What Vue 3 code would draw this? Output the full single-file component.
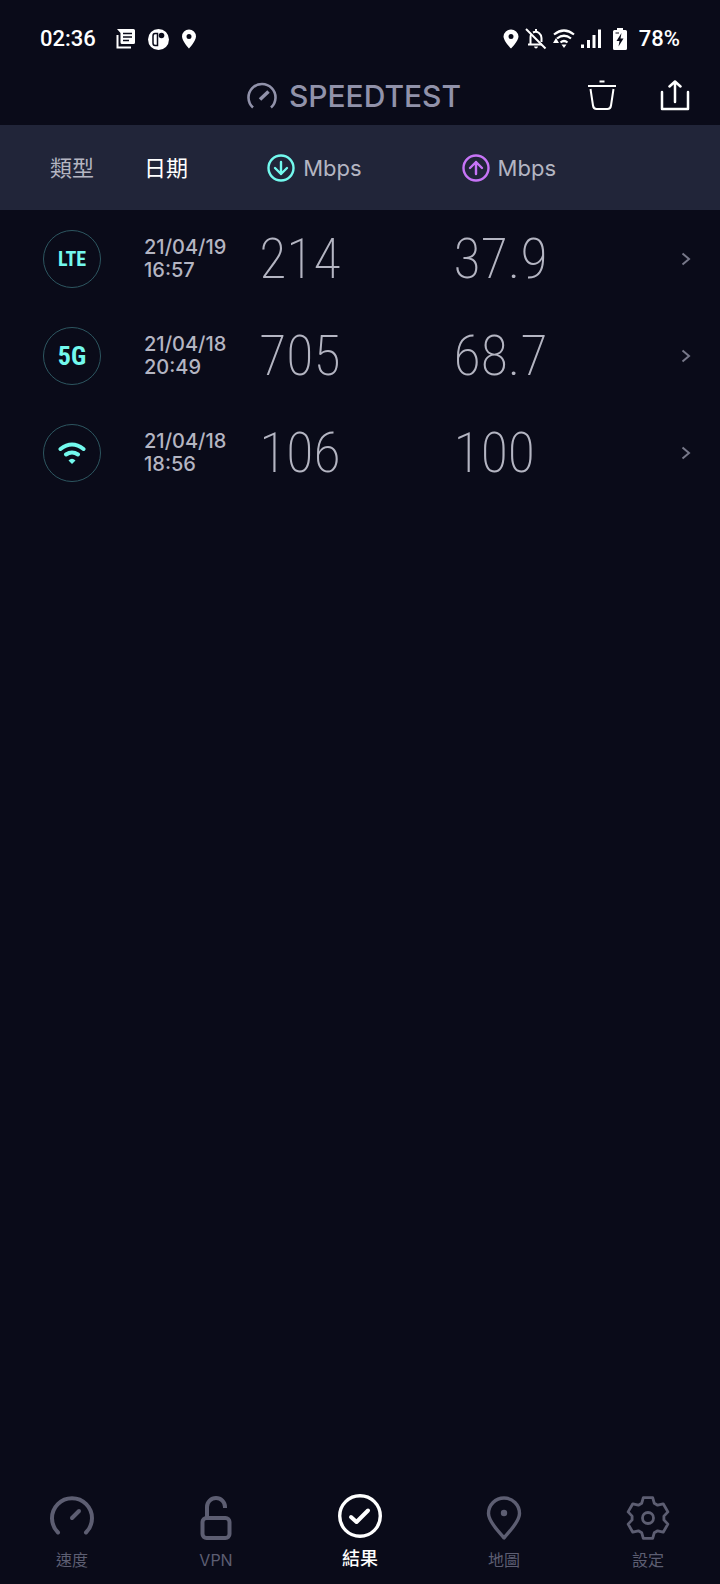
<script setup>
const results = [
  { type: 'LTE', date: '21/04/19', time: '16:57', down: '214', up: '37.9' },
  { type: '5G', date: '21/04/18', time: '20:49', down: '705', up: '68.7' },
  { type: 'wifi', date: '21/04/18', time: '18:56', down: '106', up: '100' },
]

const tabs = [
  { id: 'speed', label: '速度' },
  { id: 'vpn', label: 'VPN' },
  { id: 'results', label: '結果', active: true },
  { id: 'map', label: '地圖' },
  { id: 'settings', label: '設定' },
]

// Outline of a six-toothed gear centred in a 44 x 44 box.
const gearPoints = []
for (let tooth = 0; tooth < 6; tooth++) {
  for (const [offset, radius] of [[-23, 16], [-13, 20.8], [13, 20.8], [23, 16]]) {
    const angle = ((tooth * 60 + offset) * Math.PI) / 180
    gearPoints.push(`${(22 + radius * Math.sin(angle)).toFixed(1)},${(22 - radius * Math.cos(angle)).toFixed(1)}`)
  }
}
const gear = gearPoints.join(' ')
</script>

<template>
  <div class="screen">
    <div class="status">
      <span class="clock">02:36</span>
      <div class="notices">
        <svg width="20" height="20" viewBox="0 0 20 20">
          <path d="M1.5 6V18.5H15" fill="none" stroke="#fff" stroke-width="2" />
          <path d="M1 0H17.5Q19 0 19 1.5V13.5Q19 15 17.5 15H6Q4.5 15 4.5 13.5V4Z" fill="#fff" />
          <path d="M7 4.5H16M7 8H16M7 11.5H13" stroke="#0a0b19" stroke-width="1.5" />
        </svg>
        <svg width="21" height="21" viewBox="0 0 21 21">
          <circle cx="10.5" cy="10.5" r="10.5" fill="#fff" />
          <path d="M9.500 4.500H7Q5 4.500 5 7V14Q5 16.500 7 16.500H9.500Z" fill="#fff" stroke="#0a0b19" stroke-width="1.500" />
          <circle cx="13.5" cy="6.5" r="2.8" fill="#0a0b19" />
        </svg>
        <svg width="16" height="20" viewBox="0 0 16 20">
          <path fill="#fff" fill-rule="evenodd" d="M8 .5A7 7 0 0 0 1 7.5C1 12 8 19.5 8 19.5S15 12 15 7.5A7 7 0 0 0 8 .5ZM8 5A2.5 2.5 0 1 1 8 10A2.5 2.5 0 0 1 8 5Z" />
        </svg>
      </div>
      <div class="system">
        <svg width="16" height="20" viewBox="0 0 16 20">
          <path fill="#fff" fill-rule="evenodd" d="M8 .5A7.500 7.500 0 0 0 .5 7.5C.5 12 8 19.5 8 19.5S15.500 12 15.500 7.5A7.500 7.500 0 0 0 8 .5ZM8 5A2.5 2.5 0 1 1 8 10A2.5 2.5 0 0 1 8 5Z" />
        </svg>
        <svg width="22" height="22" viewBox="0 0 22 22" fill="none" stroke="#fff" stroke-width="2">
          <path d="M6 6.5Q5.5 8 5.5 10V16M3 16.5H17M8 4.5Q11 3 14 5Q16.5 7 16.5 10V14M11 4V1" />
          <path d="M9 18.5H13Q12.5 20.5 11 20.5T9 18.5Z" fill="#fff" stroke="none" />
          <path d="M1 1L20.5 20.5" />
        </svg>
        <svg width="22" height="20" viewBox="0 0 22 20" fill="none" stroke="#fff" stroke-width="2.2">
          <path d="M1 5.5Q11 -2.5 21 5.5M4 9.5Q11 4 18 9.5M7.5 13.5Q11 10.5 14.5 13.5" />
          <path d="M8.5 15.500H13.5L11 19Z" fill="#fff" stroke="none" />
          <path d="M3 9L6 14H0Z" fill="#fff" stroke="none" />
        </svg>
        <svg width="22" height="20" viewBox="0 0 22 20" fill="#fff">
          <path d="M0 15.5H3V19H0ZM6 11H9V19H6ZM11.500 6H14.500V19H11.500ZM17 .5H20V19H17Z" />
        </svg>
        <svg width="14" height="22" viewBox="0 0 14 22" class="battery">
          <path d="M4 0H10V2H12.5Q14 2 14 3.5V20.5Q14 22 12.5 22H1.5Q0 22 0 20.5V3.5Q0 2 1.5 2H4Z" fill="#fff" />
          <path d="M8.5 5L3.5 13H6.5L5.5 18.5L10.5 10.5H7.5Z" fill="#0a0b19" />
          <path d="M2.5 5H6" stroke="#0a0b19" />
        </svg>
        <span class="clock charge">78%</span>
      </div>
    </div>

    <header class="bar">
      <h1 class="brand">
        <svg width="30" height="28" viewBox="0 0 30 28" fill="none" stroke="currentColor">
          <path d="M6 25.500A13.500 13.500 0 1 1 24 25.500" stroke-width="2.6" />
          <path d="M13 17.500L21.500 9.500" stroke-width="3.500" />
        </svg>
        SPEEDTEST
      </h1>
      <div class="actions">
        <button type="button" aria-label="刪除">
          <svg width="30" height="32" viewBox="0 0 30 32" fill="none" stroke="#fff" stroke-width="2" stroke-linejoin="round">
            <path d="M12.5 1.5H17.5M1 6H29" />
            <path d="M3.5 9L6 25.5Q6.5 29 9.5 29H20.5Q23.5 29 24 25.5L26.5 9" />
          </svg>
        </button>
        <button type="button" aria-label="分享">
          <svg width="30" height="32" viewBox="0 0 30 32" fill="none" stroke="#fff" stroke-width="2.5" stroke-linejoin="round" stroke-linecap="round">
            <path d="M2 12V29H28V12" />
            <path d="M15 22V2M9.5 6.5L15 1.5L20.5 6.5" />
          </svg>
        </button>
      </div>
    </header>

    <main>
      <table class="results">
        <thead>
          <tr>
            <th class="type">類型</th>
            <th class="sorted">日期</th>
            <th>
              <span class="unit">
                <svg class="down" width="28" height="28" viewBox="0 0 28 28">
                  <circle cx="14" cy="14" r="12.500" />
                  <path d="M14 8V20M8 14L14 20L20 14" />
                </svg>
                Mbps
              </span>
            </th>
            <th>
              <span class="unit">
                <svg class="up" width="28" height="28" viewBox="0 0 28 28">
                  <circle cx="14" cy="14" r="12.500" />
                  <path d="M14 20V8M8 14L14 8L20 14" />
                </svg>
                Mbps
              </span>
            </th>
            <th class="more"></th>
          </tr>
        </thead>
        <tbody>
          <tr v-for="r in results" :key="r.time">
            <td class="type">
              <span class="ring" :class="{ large: r.type === '5G' }">
                <svg v-if="r.type === 'wifi'" width="28" height="22" viewBox="0 0 28 22" fill="none" stroke="currentColor" stroke-width="4" stroke-linecap="round">
                  <path d="M2.5 7Q14 -2 25.5 7M8 12.5Q14 8.5 20 12.5" />
                  <path d="M10.5 18.5Q14 15 17.5 18.5L14 22Z" fill="currentColor" stroke="none" />
                </svg>
                <template v-else>{{ r.type }}</template>
              </span>
            </td>
            <td class="when">{{ r.date }}<br />{{ r.time }}</td>
            <td class="value">{{ r.down }}</td>
            <td class="value">{{ r.up }}</td>
            <td class="more">
              <button type="button" aria-label="詳細資料">
                <svg width="10" height="14" viewBox="0 0 10 14" fill="none" stroke="currentColor" stroke-width="2">
                  <path d="M1.5 1.5L8 7L1.5 12.5" />
                </svg>
              </button>
            </td>
          </tr>
        </tbody>
      </table>
    </main>

    <nav class="tabs">
      <a v-for="t in tabs" :key="t.id" :href="'#' + t.id" :class="{ active: t.active }">
        <svg width="44" height="44" viewBox="0 0 44 44" fill="none" stroke="currentColor" stroke-width="4" stroke-linecap="round" stroke-linejoin="round">
          <template v-if="t.id === 'speed'">
            <path d="M8 36.5A20 20 0 1 1 36 36.5" />
            <path d="M22 22L29 15" />
          </template>
          <template v-else-if="t.id === 'vpn'">
            <rect x="8.500" y="22" width="27" height="20" rx="4" />
            <path d="M13 21V11A9 9 0 0 1 31 11V12" stroke-linecap="butt" />
          </template>
          <template v-else-if="t.id === 'results'">
            <circle cx="22" cy="22" r="20.300" stroke-width="3.400" />
            <path d="M13 23L18.500 28L30 16.500" />
          </template>
          <template v-else-if="t.id === 'map'">
            <path d="M22 42C18 36.500 6.500 26.500 6.500 17.500A15.500 15.500 0 0 1 37.500 17.500C37.500 26.500 26 36.500 22 42Z" stroke-width="3.400" />
            <circle cx="22" cy="17" r="3.200" fill="currentColor" stroke="none" />
          </template>
          <template v-else>
            <polygon :points="gear" stroke-width="2.800" />
            <circle cx="22" cy="22" r="5.500" stroke-width="2.800" />
          </template>
        </svg>
        <span>{{ t.label }}</span>
      </a>
    </nav>
  </div>
</template>

<style>
body {
  background: #0a0b19;
}
</style>

<style scoped>
.screen {
  display: flex;
  flex-direction: column;
  min-height: 100vh;
  background: #0a0b19;
  color: #b4b5c2;
  font-family: Inter, "Noto Sans CJK TC", sans-serif;
}
svg {
  display: block;
  flex: none;
}
button {
  padding: 0;
  border: 0;
  background: none;
  color: inherit;
  cursor: pointer;
}
.status {
  display: flex;
  align-items: center;
  height: 76px;
  padding: 2px 40px 0;
  box-sizing: border-box;
}
.clock {
  color: #fff;
  font: 500 22px/26px Roboto, sans-serif;
}
.notices {
  display: flex;
  align-items: center;
  gap: 12px;
  margin-left: 20px;
}
.system {
  display: flex;
  align-items: center;
  gap: 6px;
  margin-left: auto;
}
.battery {
  margin-left: 4px;
}
.charge {
  margin-left: 6px;
}
.bar {
  display: grid;
  grid-template-columns: 1fr auto 1fr;
  align-items: center;
  height: 49px;
  padding: 0 30px 10px;
  box-sizing: border-box;
}
.brand {
  display: flex;
  grid-column: 2;
  align-items: center;
  gap: 12px;
  margin: 0;
  padding-right: 12px;
  color: #9192aa;
  font-size: 30px;
  font-weight: 500;
  line-height: 38px;
}
.actions {
  display: flex;
  justify-content: flex-end;
  gap: 43px;
}
.results {
  width: 100%;
  border-collapse: collapse;
  table-layout: fixed;
}
th,
td {
  padding: 0;
  text-align: left;
}
thead tr {
  height: 85px;
  background: #212539;
}
th {
  width: 27%;
  font-size: 22px;
  font-weight: 400;
}
th.type {
  width: 20%;
  padding: 0 0 4px 50px;
  box-sizing: border-box;
}
th.sorted {
  width: 16%;
  padding-bottom: 4px;
  color: #fff;
}
th.more {
  width: 10%;
}
.unit {
  display: flex;
  align-items: center;
  gap: 8px;
  padding-left: 8px;
}
.unit svg {
  fill: none;
  stroke-width: 2.4;
  stroke-linecap: round;
  stroke-linejoin: round;
}
.down {
  stroke: #73f9ee;
}
.up {
  stroke: #c774f7;
}
tbody tr {
  height: 97px;
}
td.type {
  padding-left: 43px;
}
.ring {
  display: flex;
  align-items: center;
  justify-content: center;
  width: 58px;
  height: 58px;
  box-sizing: border-box;
  border: 1px solid #2d5660;
  border-radius: 50%;
  color: #73f9ee;
  font: 700 20px/24px "Roboto Condensed", Roboto, sans-serif;
}
.ring.large {
  font-size: 26px;
}
.when {
  font-size: 20px;
  font-weight: 500;
  line-height: 23px;
}
.value {
  font-family: "Noto Sans ExtraCondensed", "Roboto Condensed", Roboto, sans-serif;
  font-size: 56px;
  font-weight: 200;
  line-height: 64px;
}
td.more {
  padding-right: 29px;
  color: #777889;
}
td.more button {
  display: block;
  margin-left: auto;
}
.tabs {
  display: grid;
  grid-template-columns: repeat(5, 1fr);
  align-items: end;
  margin-top: auto;
  padding-bottom: 12px;
}
.tabs a {
  display: flex;
  flex-direction: column;
  align-items: center;
  gap: 8px;
  color: #5d5e72;
  font-size: 16px;
  line-height: 24px;
  text-decoration: none;
}
.tabs a.active {
  color: #fff;
  font-size: 18px;
  font-weight: 500;
  line-height: 26px;
}
</style>
